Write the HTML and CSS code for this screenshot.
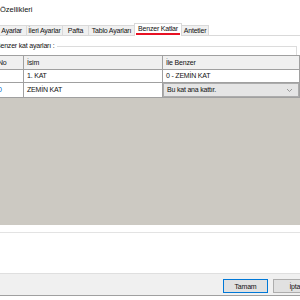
FILE: index.html
```html
<!DOCTYPE html>
<html lang="tr">
<head>
    <meta charset="UTF-8">
    <title>Kat Özellikleri</title>
    <link rel="stylesheet" href="styles.css">
</head>
<body>
    <div class="dialog">
        <div class="titlebar">Özellikleri</div>

        <div class="tabs">
            <div class="tab first">Ayarlar</div>
            <div class="tab w36">İleri Ayarlar</div>
            <div class="tab w26">Pafta</div>
            <div class="tab w46">Tablo Ayarları</div>
            <div class="tab active w47"><span>Benzer Katlar</span></div>
            <div class="tab w27">Antetler</div>
        </div>

        <div class="page">
            <div class="group">
                <span class="group-title">Benzer kat ayarları :</span>
                <div class="group-line"></div>
            </div>
            <div class="grid">
                <div class="row head">
                    <div class="cell no">No</div>
                    <div class="cell">İsim</div>
                    <div class="cell">İle Benzer</div>
                </div>
                <div class="row">
                    <div class="cell no"></div>
                    <div class="cell">1. KAT</div>
                    <div class="cell">0 - ZEMİN KAT</div>
                </div>
                <div class="row current">
                    <div class="cell no">0</div>
                    <div class="cell">ZEMİN KAT</div>
                    <div class="cell combo-cell">
                        <div class="combo">
                            <span>Bu kat ana kattır.</span>
                            <svg width="7" height="5" viewBox="0 0 7 5"><path d="M1 1 L3.5 3.5 L6 1" fill="none" stroke="#999" stroke-width="1"/></svg>
                        </div>
                    </div>
                </div>
                <div class="grid-bg"></div>
            </div>
            <div class="page-bottom"></div>
        </div>

        <div class="footer">
            <button class="btn primary">Tamam</button>
            <button class="btn">İptal</button>
        </div>
    </div>
</body>
</html>
```

FILE: styles.css
```css
body { margin: 0; overflow: hidden; background: #fff; font-family: "Liberation Sans", Arial, sans-serif; font-size: 7px; letter-spacing: -0.2px; color: #111; }
.dialog { margin-left: -8px; width: 326px; }
.titlebar { height: 20px; line-height: 20px; padding-left: 8px; font-size: 7.5px; letter-spacing: 0; }

.tabs { display: flex; align-items: flex-end; height: 12px; margin-top: 3px; border-bottom: 1px solid #d9d9d9; }
.tab { box-sizing: border-box; height: 10px; line-height: 9px; background: #f0f0f0; border: 1px solid #d9d9d9; border-bottom: none; margin-right: -1px; text-align: center; white-space: nowrap; overflow: hidden; }
.tab.first { width: 35px; text-align: right; padding-right: 4px; }
.w26 { width: 27px; }
.w27 { width: 28px; }
.w36 { width: 37px; }
.w46 { width: 47px; }
.w47 { width: 48px; }
.tab.active { height: 13px; background: #fff; margin-bottom: -1px; position: relative; }
.tab.active span { display: block; margin: 0 1px; padding-top: 1px; line-height: 8px; border-bottom: 2px solid #e81123; }

.group { display: flex; height: 19px; }
.group-title { line-height: 19px; padding-left: 4px; white-space: nowrap; }
.group-line { flex: 1; margin: 10px 21px 0 3px; border-top: 1px solid #dcdcdc; border-right: 1px solid #dcdcdc; }

.grid { margin-right: 18px; border-top: 1px solid #a0a0a0; }
.row { display: grid; grid-template-columns: 32px 139px 1fr; }
.cell { box-sizing: border-box; height: 13px; line-height: 12px; padding-left: 3px; border-right: 1px solid #a0a0a0; border-bottom: 1px solid #a0a0a0; background: #fff; white-space: nowrap; }
.cell.no { padding-left: 6px; }
.head .cell { height: 14px; line-height: 13px; background: #f0f0f0; }
.current .cell { height: 15px; line-height: 14px; }
.current .cell.no { color: #0066cc; }
.combo-cell { padding: 0; }
.combo { display: flex; justify-content: space-between; align-items: center; height: 14px; box-sizing: border-box; padding: 0 5px 0 3px; background: #e5e5e5; border: 1px solid #acacac; }
.grid-bg { height: 127px; margin-right: -18px; background: #ccc9c2; }

.page-bottom { height: 7px; border-bottom: 1px solid #e3e3e3; margin-bottom: 40px; }

.footer { display: flex; justify-content: flex-end; gap: 5px; height: 23px; padding-top: 5px; box-sizing: border-box; background: #f0f0f0; border-top: 1px solid #dfdfdf; border-bottom: 1px solid #a0a0a0; }
.btn { box-sizing: border-box; width: 45px; height: 14px; padding: 0; font-family: inherit; font-size: 7px; letter-spacing: -0.2px; color: #111; background: #e1e1e1; border: 1px solid #adadad; }
.btn.primary { border-color: #0078d7; }
```
